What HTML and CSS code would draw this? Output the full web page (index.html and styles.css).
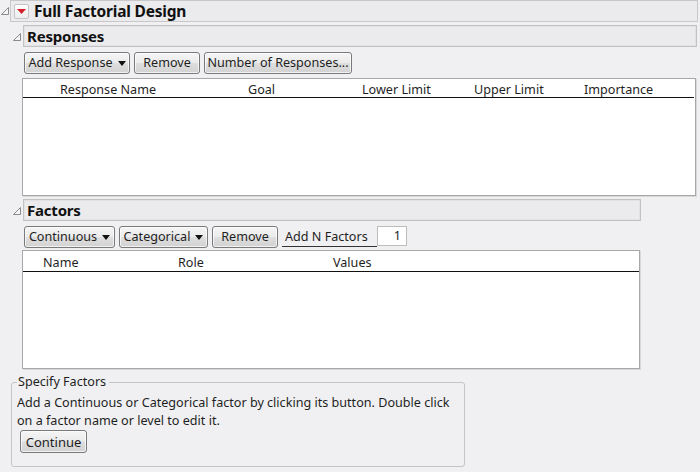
FILE: index.html
```html
<!DOCTYPE html>
<html>
<head>
<meta charset="utf-8">
<link rel="stylesheet" href="styles.css">
</head>
<body>
<div class="page">
  <div class="orow top-row">
    <svg class="disc" width="8" height="8" viewBox="0 0 8 8"><polygon points="0.5,7.5 7.5,7.5 7.5,0.5" fill="#f4f4f4" stroke="#8a8a8a" stroke-width="1"/></svg>
    <div class="hdr hdr-top">
      <span class="redbtn"><svg width="9" height="5" viewBox="0 0 9 5"><polygon points="0,0 9,0 4.5,5" fill="#d4202a"/></svg></span>
      <span class="title">Full Factorial Design</span>
    </div>
  </div>

  <div class="section">
    <div class="orow">
      <svg class="disc" width="8" height="8" viewBox="0 0 8 8"><polygon points="0.5,7.5 7.5,7.5 7.5,0.5" fill="#f4f4f4" stroke="#8a8a8a" stroke-width="1"/></svg>
      <div class="hdr hdr-resp"><span class="subtitle">Responses</span></div>
    </div>
    <div class="content">
      <div class="btnrow">
        <button class="btn w-addresp">Add Response <span class="arrow"></span></button>
        <button class="btn w-remove1">Remove</button>
        <button class="btn w-numresp">Number of Responses...</button>
      </div>
      <div class="tbl tbl-resp">
        <div class="thead thead-resp">
          <span class="c1">Response Name</span>
          <span class="c2">Goal</span>
          <span class="c3">Lower Limit</span>
          <span class="c4">Upper Limit</span>
          <span class="c5">Importance</span>
        </div>
      </div>
    </div>
  </div>

  <div class="section">
    <div class="orow">
      <svg class="disc" width="8" height="8" viewBox="0 0 8 8"><polygon points="0.5,7.5 7.5,7.5 7.5,0.5" fill="#f4f4f4" stroke="#8a8a8a" stroke-width="1"/></svg>
      <div class="hdr hdr-fact"><span class="subtitle">Factors</span></div>
    </div>
    <div class="content">
      <div class="btnrow">
        <button class="btn w-cont">Continuous <span class="arrow"></span></button>
        <button class="btn w-cat">Categorical <span class="arrow"></span></button>
        <button class="btn w-remove2">Remove</button>
        <span class="addn">Add N Factors</span>
        <span class="numbox">1</span>
      </div>
      <div class="tbl tbl-fact">
        <div class="thead thead-fact">
          <span class="f1">Name</span>
          <span class="f2">Role</span>
          <span class="f3">Values</span>
        </div>
      </div>
    </div>
  </div>

  <fieldset class="group">
    <legend>Specify Factors</legend>
    <p class="note">Add a Continuous or Categorical factor by clicking its button. Double click<br>on a factor name or level to edit it.</p>
    <button class="btn w-continue">Continue</button>
  </fieldset>
</div>
</body>
</html>
```

FILE: styles.css
```css
html, body {
  margin: 0;
  padding: 0;
  background: #f0f0f2;
}
body {
  font-family: "Noto Sans", "DejaVu Sans", sans-serif;
  font-size: 12.6px;
  color: #1f1f1f;
  width: 700px;
  height: 472px;
  overflow: hidden;
}
.page {
  display: flex;
  flex-direction: column;
}
.orow {
  display: flex;
  align-items: center;
}
.top-row {
  padding-left: 1px;
  height: 22px;
}
.top-row .disc {
  margin-right: 1px;
}
.section .orow {
  padding-left: 13px;
  margin-top: 3px;
}
.section .orow .disc {
  margin-right: 2px;
  margin-top: 1px;
}
.hdr {
  box-sizing: border-box;
  height: 22px;
  background: #ebebed;
  border: 1px solid #c2c2c4;
  box-shadow: inset 0 0 0 1px #e2e2e4;
  display: flex;
  align-items: center;
}
.hdr-top {
  width: 688px;
  height: 22px;
  padding-left: 3px;
  border-color: #c8c8ca;
  box-shadow: none;
}
.hdr-resp {
  width: 674px;
  padding-left: 3px;
}
.hdr-fact {
  width: 618px;
  padding-left: 3px;
}
.redbtn {
  box-sizing: border-box;
  width: 15px;
  height: 15px;
  border: 1px solid #c4c4c4;
  border-radius: 2px;
  background: linear-gradient(#ffffff, #ececec);
  display: flex;
  align-items: center;
  justify-content: center;
  margin-right: 5px;
}
.title {
  font-weight: bold;
  font-size: 15.5px;
  color: #111;
  letter-spacing: -0.2px;
}
.subtitle {
  font-weight: bold;
  font-size: 15px;
  color: #111;
  letter-spacing: -0.2px;
}
.content {
  padding-left: 22px;
  display: flex;
  flex-direction: column;
}
.btnrow {
  display: flex;
  align-items: center;
  gap: 4px;
  margin-top: 4px;
  padding-left: 2px;
  height: 23px;
}
.btn {
  box-sizing: border-box;
  height: 22px;
  font-family: inherit;
  font-size: 12.6px;
  color: #1f1f1f;
  border: 1px solid #7a7a7a;
  border-radius: 3px;
  background: linear-gradient(#f5f5f5 0%, #ebebeb 48%, #dedede 52%, #d2d2d2 100%);
  box-shadow: inset 0 0 0 1px rgba(255,255,255,0.7);
  padding: 0 2px;
  display: inline-flex;
  align-items: center;
  justify-content: center;
  white-space: nowrap;
}
.arrow {
  display: inline-block;
  width: 0;
  height: 0;
  border-left: 4px solid transparent;
  border-right: 4px solid transparent;
  border-top: 5px solid #111;
  margin-left: 5px;
  margin-top: 1px;
}
.w-addresp { width: 106px; }
.w-remove1 { width: 66px; }
.w-numresp { width: 148px; }
.w-cont { width: 91px; }
.w-cat { width: 89px; }
.w-remove2 { width: 66px; }
.addn {
  box-sizing: border-box;
  width: 95px;
  height: 20px;
  padding-left: 3px;
  border-bottom: 1px solid #333;
  display: flex;
  align-items: center;
  margin-top: 1px;
}
.numbox {
  box-sizing: border-box;
  width: 30px;
  height: 20px;
  margin-left: -4px;
  background: #fff;
  border: 1px solid #bdbdbd;
  display: flex;
  align-items: center;
  justify-content: flex-end;
  padding-right: 5px;
  margin-top: -2px;
}
.tbl {
  box-sizing: border-box;
  background: #fff;
  border: 1px solid #a8a8a8;
  box-shadow: 1px 1px 0 #d8d8d8;
}
.tbl-resp {
  width: 674px;
  height: 118px;
  margin-top: 4px;
}
.tbl-fact {
  width: 618px;
  height: 119px;
  margin-top: 2px;
}
.thead {
  box-sizing: border-box;
  display: flex;
  border-bottom: 1px solid #111;
  align-items: center;
  padding-top: 2px;
}
.thead-resp {
  height: 19px;
  margin-right: 1px;
}
.thead-fact {
  height: 21px;
  padding-top: 3px;
}
.thead span {
  display: block;
  white-space: nowrap;
}
.c1 { margin-left: 37px; width: 188px; }
.c2 { width: 114px; }
.c3 { width: 112px; }
.c4 { width: 110px; }
.c5 { width: 80px; }
.f1 { margin-left: 20px; width: 135px; }
.f2 { width: 155px; }
.f3 { width: 60px; }
.group {
  box-sizing: border-box;
  width: 454px;
  height: 93px;
  margin: 5px 0 0 11px;
  padding: 0 5px 0 5px;
  border: 1px solid #c4c4c6;
  border-radius: 3px;
  min-width: 0;
}
.group legend {
  padding: 0 3px 0 1px;
  margin-left: 0;
  line-height: 16px;
}
.note {
  margin: 4px 0 0 0;
  line-height: 18px;
}
.w-continue {
  width: 67px;
  height: 23px;
  margin-left: 3px;
  margin-top: 0;
  font-size: 13px;
}
```
